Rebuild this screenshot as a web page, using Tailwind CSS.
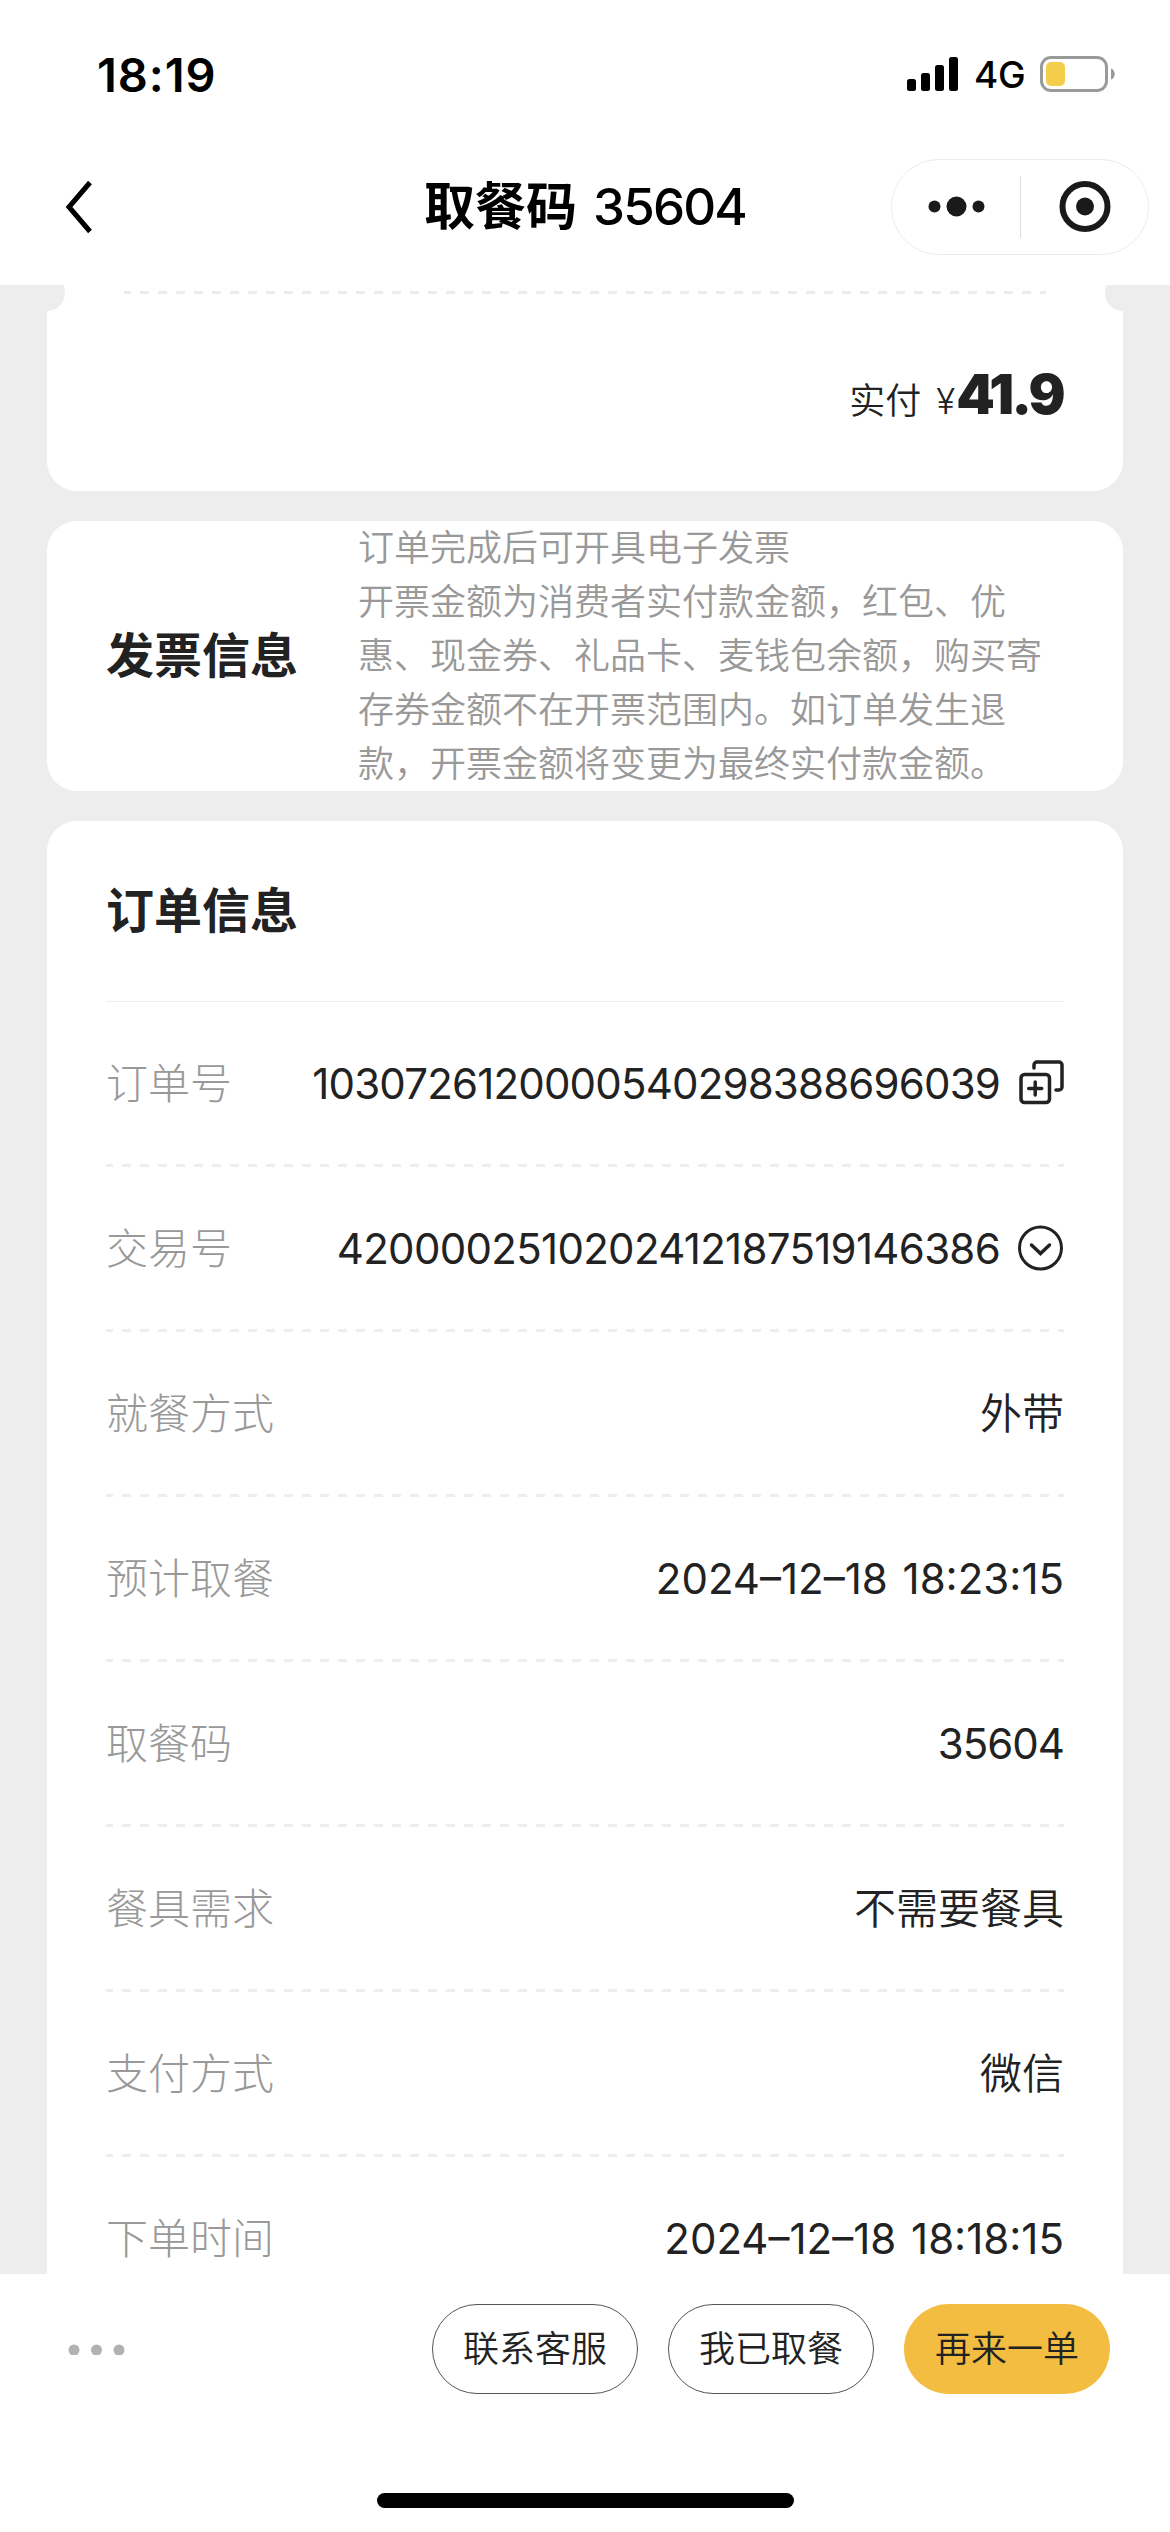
<!DOCTYPE html>
<html lang="zh-CN">
<head>
<meta charset="utf-8">
<title>取餐码 35604</title>
<script src="https://cdn.jsdelivr.net/npm/@tailwindcss/browser@4"></script>
</head>
<body class="w-[1170px] h-[2532px] overflow-hidden bg-white text-[#222] font-[Inter,'Noto_Sans_CJK_SC',sans-serif] flex flex-col">

  <!-- status bar -->
  <header class="h-[132px] shrink-0 flex items-start justify-between pl-[97px] pr-[54px] text-black">
    <div class="mt-[47px] text-[47px] leading-[56px] font-semibold tracking-[0.9px]">18:19</div>
    <div class="mt-[54px] flex items-center h-10">
      <svg class="w-[52px] h-9" viewBox="0 0 52 36"><rect x="0" y="23" width="9" height="12" rx="2.5"/><rect x="14" y="17" width="9" height="18" rx="2.5"/><rect x="28" y="9" width="9" height="26" rx="2.5"/><rect x="42" y="1" width="9" height="34" rx="2.5"/></svg>
      <span class="ml-[15px] mt-[2px] w-[66px] text-[37px] leading-10 font-medium tracking-[-0.3px]">4G</span>
      <svg class="w-[76px] h-9" viewBox="0 0 76 36"><rect x="1.5" y="1.5" width="65" height="33" rx="9.5" fill="#fff" stroke="#9a9a9a" stroke-width="3"/><rect x="6" y="6" width="19" height="24" rx="5" fill="#f4cd4b"/><path d="M71 12.5c5 1.500 5 9.500 0 11z" fill="#9a9a9a"/></svg>
    </div>
  </header>

  <!-- navigation bar -->
  <nav class="h-[153px] shrink-0 grid grid-cols-[1fr_auto_1fr] items-start text-black">
    <svg class="ml-[64px] mt-[48px] w-[30px] h-[54px]" viewBox="0 0 30 54" fill="none" stroke="#000" stroke-width="5"><path d="M26 2.500 5 27l21 24.500"/></svg>
    <h1 class="mt-[45px] flex items-baseline gap-[16px] text-[51px] leading-[60px] whitespace-nowrap"><span class="font-bold">取餐码</span><span class="font-medium tracking-[-1.8px]">35604</span></h1>
    <div class="justify-self-end mr-[21px] mt-[27px] w-[258px] h-[96px] rounded-full border border-[#ebebeb] flex items-center">
      <svg class="w-[128px] h-[30px]" viewBox="0 0 128 30" fill="#1a1a1a"><circle cx="42.500" cy="14.500" r="6"/><circle cx="64.500" cy="14.500" r="10"/><circle cx="86.500" cy="14.500" r="6"/></svg>
      <div class="w-px h-[62px] bg-[#dcdcdc]"></div>
      <svg class="ml-[38px] w-[52px] h-[52px]" viewBox="0 0 52 52"><circle cx="26" cy="25.500" r="22.500" fill="none" stroke="#1a1a1a" stroke-width="6"/><circle cx="26" cy="25.500" r="9" fill="#1a1a1a"/></svg>
    </div>
  </nav>

  <!-- scrolling content -->
  <main class="h-[1989px] shrink-0 overflow-hidden bg-[#ededed] px-[47px] flex flex-col gap-[30px]">
    <section class="relative h-[206px] shrink-0 bg-white rounded-b-[30px] overflow-hidden">
      <div class="absolute -left-[18px] -top-[10px] size-9 rounded-full bg-[#ededed]"></div>
      <div class="absolute -right-[18px] -top-[10px] size-9 rounded-full bg-[#ededed]"></div>
      <div class="mx-[77px] mt-[6px] h-[3px] bg-[repeating-linear-gradient(90deg,#ececec_0_9px,transparent_9px_18px)] bg-[position:-2px_0]"></div>
      <div class="mt-[67px] pr-[60px] flex justify-end items-baseline leading-[66px]">
        <span class="text-[36px] font-[350]">实付</span>
        <span class="ml-[15px] mr-px text-[35px] font-light">¥</span>
        <span class="text-[55px] font-black tracking-[-2.6px]">41.9</span>
      </div>
    </section>

    <section class="h-[270px] shrink-0 bg-white rounded-[30px] flex items-center pl-[59px]">
      <h2 class="w-[252px] text-[48px] leading-[60px] font-bold">发票信息</h2>
      <p class="w-[700px] text-[36px] leading-[54px] text-[#999] font-[350]">订单完成后可开具电子发票<br>开票金额为消费者实付款金额，红包、优<br>惠、现金券、礼品卡、麦钱包余额，购买寄<br>存券金额不在开票范围内。如订单发生退<br>款，开票金额将变更为最终实付款金额。</p>
    </section>

    <section class="h-[1500px] shrink-0 bg-white rounded-t-[30px] px-[59px]">
      <h2 class="h-[181px] pt-[60px] text-[48px] leading-[60px] font-bold border-b border-[#eee]">订单信息</h2>
      <dl class="text-[42px] leading-[60px] font-normal">
        <div class="h-[165px] flex flex-col">
          <div class="flex-1 pt-px flex items-center justify-between"><dt class="text-[#999] font-light">订单号</dt><dd class="flex items-center"><span class="tracking-[-0.82px]">1030726120000540298388696039</span>
            <svg class="ml-[18px] -mt-[3px] w-[46px] h-[46px]" viewBox="0 0 46 46" fill="none" stroke="#222" stroke-width="3.500" stroke-linecap="round"><rect x="3" y="15.500" width="28.500" height="28" rx="3.500"/><path d="M17.200 23v13M10.700 29.500h13M16 9V6a3 3 0 0 1 3-3h22a3 3 0 0 1 3 3v22a3 3 0 0 1-3 3h-3"/></svg></dd></div>
          <div class="h-[3px] bg-[repeating-linear-gradient(90deg,#eee_0_9px,transparent_9px_18px)] bg-[position:-2px_0]"></div>
        </div>
        <div class="h-[165px] flex flex-col">
          <div class="flex-1 pt-px flex items-center justify-between"><dt class="text-[#999] font-light">交易号</dt><dd class="flex items-center"><span class="tracking-[-0.7px]">4200002510202412187519146386</span>
            <svg class="ml-[18px] -mt-px w-[46px] h-[46px]" viewBox="0 0 46 46" fill="none" stroke="#222" stroke-width="3" stroke-linecap="round"><circle cx="22.500" cy="23" r="21"/><path stroke-width="3.500" d="m13.500 20 9 8.500 9-8.500"/></svg></dd></div>
          <div class="h-[3px] bg-[repeating-linear-gradient(90deg,#eee_0_9px,transparent_9px_18px)] bg-[position:-2px_0]"></div>
        </div>
        <div class="h-[165px] flex flex-col">
          <div class="flex-1 pt-px flex items-center justify-between"><dt class="text-[#999] font-light">就餐方式</dt><dd class="font-[350]">外带</dd></div>
          <div class="h-[3px] bg-[repeating-linear-gradient(90deg,#eee_0_9px,transparent_9px_18px)] bg-[position:-2px_0]"></div>
        </div>
        <div class="h-[165px] flex flex-col">
          <div class="flex-1 pt-px flex items-center justify-between"><dt class="text-[#999] font-light">预计取餐</dt><dd class="[word-spacing:3px]">2024–12–18 18:23:15</dd></div>
          <div class="h-[3px] bg-[repeating-linear-gradient(90deg,#eee_0_9px,transparent_9px_18px)] bg-[position:-2px_0]"></div>
        </div>
        <div class="h-[165px] flex flex-col">
          <div class="flex-1 pt-px flex items-center justify-between"><dt class="text-[#999] font-light">取餐码</dt><dd class="tracking-[-1px]">35604</dd></div>
          <div class="h-[3px] bg-[repeating-linear-gradient(90deg,#eee_0_9px,transparent_9px_18px)] bg-[position:-2px_0]"></div>
        </div>
        <div class="h-[165px] flex flex-col">
          <div class="flex-1 pt-px flex items-center justify-between"><dt class="text-[#999] font-light">餐具需求</dt><dd class="font-[350]">不需要餐具</dd></div>
          <div class="h-[3px] bg-[repeating-linear-gradient(90deg,#eee_0_9px,transparent_9px_18px)] bg-[position:-2px_0]"></div>
        </div>
        <div class="h-[165px] flex flex-col">
          <div class="flex-1 pt-px flex items-center justify-between"><dt class="text-[#999] font-light">支付方式</dt><dd class="font-[350]">微信</dd></div>
          <div class="h-[3px] bg-[repeating-linear-gradient(90deg,#eee_0_9px,transparent_9px_18px)] bg-[position:-2px_0]"></div>
        </div>
        <div class="h-[165px] flex flex-col">
          <div class="flex-1 pt-px flex items-center justify-between"><dt class="text-[#999] font-light">下单时间</dt><dd class="[word-spacing:3px]">2024–12–18 18:18:15</dd></div>
          <div class="h-[3px]"></div>
        </div>
      </dl>
    </section>
  </main>

  <!-- action bar -->
  <footer class="flex-1 bg-white flex flex-col items-center">
    <div class="mt-[30px] h-[90px] w-full pl-[68px] pr-[60px] flex items-center gap-[30px] text-[36px] font-[350]">
      <svg class="mr-auto w-[58px] h-3" viewBox="0 0 58 12" fill="#b2b2b2"><circle cx="6" cy="7" r="5.500"/><circle cx="28.500" cy="7" r="5.500"/><circle cx="51" cy="7" r="5.500"/></svg>
      <button class="w-[206px] h-[90px] rounded-full border border-[#555]">联系客服</button>
      <button class="w-[206px] h-[90px] rounded-full border border-[#555]">我已取餐</button>
      <button class="w-[206px] h-[90px] rounded-full bg-[#f3bd42]">再来一单</button>
    </div>
    <div class="mt-[99px] w-[417px] h-[15px] rounded-full bg-black"></div>
  </footer>
</body>
</html>
